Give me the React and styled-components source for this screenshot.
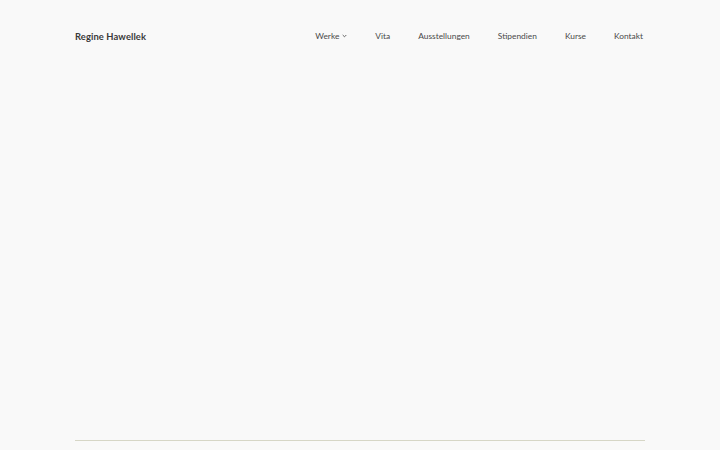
import React from "react";
import styled, { createGlobalStyle } from "styled-components";

const Global = createGlobalStyle`
  html, body { margin: 0; padding: 0; background: #f9f9f9; }
  body { font-family: "Lato", "Noto Sans", sans-serif; -webkit-font-smoothing: antialiased; }
`;

const Page = styled.div`
  width: 570px;
  height: 450px;
  margin: 0 auto;
  display: flex;
  flex-direction: column;
`;

const Header = styled.header`
  height: 72px;
  display: flex;
  align-items: center;
  justify-content: space-between;
`;

const Brand = styled.a`
  font-size: 9.4px;
  font-weight: 700;
  color: #3a3a3a;
  letter-spacing: 0.1px;
  text-decoration: none;
`;

const Nav = styled.nav`
  display: flex;
  align-items: center;
  gap: 28px;
  padding-right: 2px;
`;

const NavItem = styled.a`
  display: flex;
  align-items: center;
  gap: 3px;
  font-size: 8.4px;
  color: #4a4a4a;
  text-decoration: none;
`;

const Main = styled.main`
  flex: 1;
`;

const Rule = styled.hr`
  margin: 0 0 9px;
  border: 0;
  height: 1px;
  background: #d6d6c6;
`;

const Chevron = () => (
  <svg width="5" height="4" viewBox="0 0 5 4" fill="none" stroke="#555" strokeWidth="0.9">
    <path d="M0.7 1 L2.5 2.8 L4.3 1" />
  </svg>
);

const items = ["Vita", "Ausstellungen", "Stipendien", "Kurse", "Kontakt"];

export default function App() {
  return (
    <>
      <Global />
      <Page>
        <Header>
          <Brand>Regine Hawellek</Brand>
          <Nav>
            <NavItem>
              Werke <Chevron />
            </NavItem>
            {items.map((t) => (
              <NavItem key={t}>{t}</NavItem>
            ))}
          </Nav>
        </Header>
        <Main />
        <Rule />
      </Page>
    </>
  );
}
